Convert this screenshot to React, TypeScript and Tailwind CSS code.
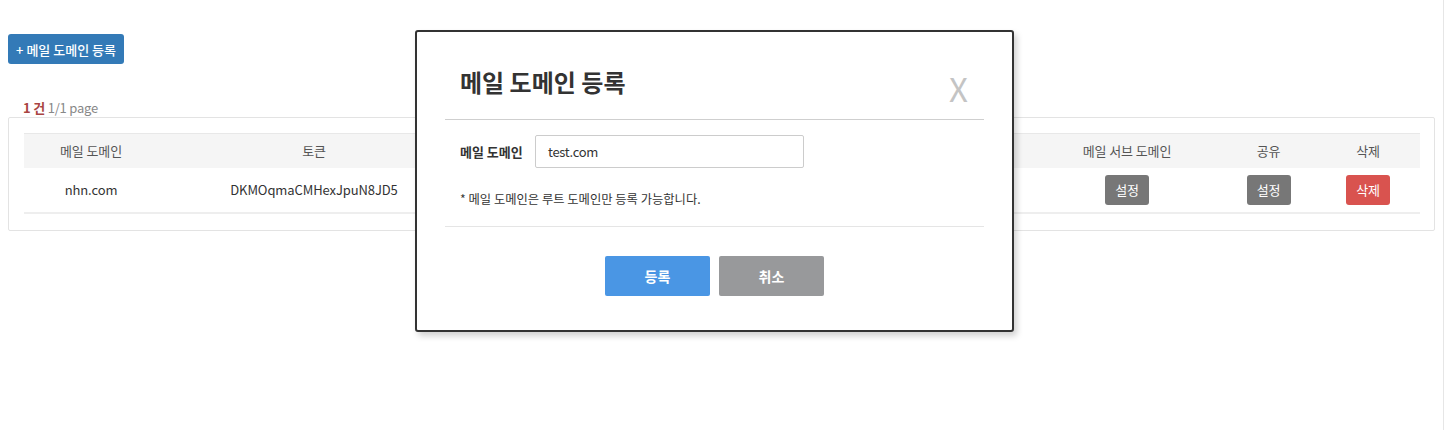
import React from "react";

const font = { fontFamily: '"Noto Sans CJK KR", "Noto Sans", sans-serif' };

export default function App() {
  return (
    <div className="relative w-[1445px] h-[430px] bg-white flex text-[#333]" style={font}>
      <div className="flex-1 flex flex-col px-[8px] pt-[34px]">
        <div>
          <button className="h-[30px] w-[116px] rounded-[3px] bg-[#337ab7] text-white text-[13px] font-medium leading-none">
            + 메일 도메인 등록
          </button>
        </div>
        <div className="mt-[35px] pl-[15px] text-[13px] leading-[18px] h-[18px] tracking-[-0.2px]">
          <span className="font-bold text-[#a94442]">1 건</span>{" "}
          <span className="text-[#888]">1/1 page</span>
        </div>
        <div className="w-[1427px] border border-[#e3e3e3] rounded-[2px] px-[15px] pt-[15px] pb-[16px]">
          <div className="grid grid-cols-[134px_312px_563px_188px_95px_104px] text-[13px] tracking-[-0.1px]">
            <div className="h-[35px] bg-[#f5f5f5] border-t border-[#e8e8e8] flex items-center justify-center text-[#555]">메일 도메인</div>
            <div className="h-[35px] bg-[#f5f5f5] border-t border-[#e8e8e8] flex items-center justify-center text-[#555]">토큰</div>
            <div className="h-[35px] bg-[#f5f5f5] border-t border-[#e8e8e8]"></div>
            <div className="h-[35px] bg-[#f5f5f5] border-t border-[#e8e8e8] flex items-center justify-center text-[#555]">메일 서브 도메인</div>
            <div className="h-[35px] bg-[#f5f5f5] border-t border-[#e8e8e8] flex items-center justify-center text-[#555]">공유</div>
            <div className="h-[35px] bg-[#f5f5f5] border-t border-[#e8e8e8] flex items-center justify-center text-[#555]">삭제</div>

            <div className="h-[46px] border-b-2 border-[#eeeeee] flex items-center justify-center">nhn.com</div>
            <div className="h-[46px] border-b-2 border-[#eeeeee] flex items-center justify-center">DKMOqmaCMHexJpuN8JD5</div>
            <div className="h-[46px] border-b-2 border-[#eeeeee]"></div>
            <div className="h-[46px] border-b-2 border-[#eeeeee] flex items-center justify-center">
              <button className="w-[44px] h-[30px] rounded-[3px] bg-[#777777] text-white text-[13px]">설정</button>
            </div>
            <div className="h-[46px] border-b-2 border-[#eeeeee] flex items-center justify-center">
              <button className="w-[44px] h-[30px] rounded-[3px] bg-[#777777] text-white text-[13px]">설정</button>
            </div>
            <div className="h-[46px] border-b-2 border-[#eeeeee] flex items-center justify-center">
              <button className="w-[44px] h-[30px] rounded-[3px] bg-[#d9534f] text-white text-[13px]">삭제</button>
            </div>
          </div>
        </div>
      </div>
      <div className="w-[1px] bg-[#e6e6e6]"></div>
      <div className="w-[3px]"></div>

      <div className="absolute left-[415px] top-[30px] w-[599px] h-[302px] bg-white border-2 border-[#333] rounded-[3px] shadow-[3px_4px_6px_rgba(0,0,0,0.18)] px-[28px] flex flex-col">
        <div className="h-[88px] flex items-start justify-between border-b border-[#cfcfcf] px-[15px]">
          <h2 className="mt-[33px] text-[24px] font-bold leading-[34px] text-[#333]">메일 도메인 등록</h2>
          <span className="mt-[39px] text-[33px] font-normal leading-[34px] text-[#c4c4c4] mr-[1px]">X</span>
        </div>
        <div className="h-[107px] border-b border-[#e5e5e5] px-[15px] pt-[15px]">
          <div className="flex items-center">
            <label className="w-[75px] text-[13px] font-bold text-[#333]">메일 도메인</label>
            <div className="w-[269px] h-[33px] border border-[#cccccc] rounded-[2px] flex items-center px-[12px] text-[13px] tracking-[-0.3px] text-[#333]">test.com</div>
          </div>
          <p className="mt-[22px] text-[12.3px] text-[#333]">* 메일 도메인은 루트 도메인만 등록 가능합니다.</p>
        </div>
        <div className="flex justify-center gap-[9px] pt-[29px]">
          <button className="w-[105px] h-[40px] rounded-[2px] bg-[#4a96e4] text-white text-[14px] font-bold">등록</button>
          <button className="w-[105px] h-[40px] rounded-[2px] bg-[#98999b] text-white text-[14px] font-bold">취소</button>
        </div>
      </div>
    </div>
  );
}
